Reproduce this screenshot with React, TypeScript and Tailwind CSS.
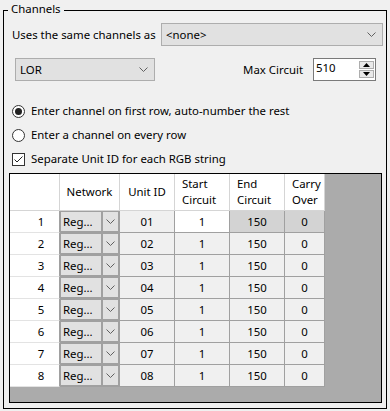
import React from "react";

const units = ["01", "02", "03", "04", "05", "06", "07", "08"];

function Chevron() {
  return (
    <svg width="9" height="5" viewBox="0 0 9 5" className="shrink-0">
      <path d="M0.5 0.5 L4.5 4.5 L8.5 0.5" fill="none" stroke="#606060" strokeWidth="1" />
    </svg>
  );
}

function Dropdown({ value, className }: { value: string; className: string }) {
  return (
    <div
      className={`flex h-[23px] items-center justify-between border border-[#adadad] bg-[#e1e1e1] pl-[4px] pr-[6px] ${className}`}
    >
      <span>{value}</span>
      <Chevron />
    </div>
  );
}

function Spinner() {
  return (
    <div className="ml-[10px] mr-[10px] flex h-[23px] w-[63px] border border-[#7a7a7a] bg-white">
      <span className="flex-1 pl-[2px] leading-[18px]">510</span>
      <div className="my-[2px] mr-[1px] flex w-[15px] flex-col gap-[1px]">
        <div className="flex flex-1 items-center justify-center border border-[#adadad] bg-[#e9e9e9]">
          <svg width="7" height="4" viewBox="0 0 7 4">
            <path d="M0 4 L3.5 0 L7 4 Z" fill="#000" />
          </svg>
        </div>
        <div className="flex flex-1 items-center justify-center border border-[#adadad] bg-[#e9e9e9]">
          <svg width="7" height="4" viewBox="0 0 7 4">
            <path d="M0 0 L3.5 4 L7 0 Z" fill="#000" />
          </svg>
        </div>
      </div>
    </div>
  );
}

function Radio({ checked, label }: { checked?: boolean; label: string }) {
  return (
    <div className="flex h-[24px] items-center pl-[8px]">
      <span className="flex h-[13px] w-[13px] items-center justify-center rounded-full border border-[#333] bg-white">
        {checked && <span className="h-[7px] w-[7px] rounded-full bg-[#222]" />}
      </span>
      <span className="ml-[6px]">{label}</span>
    </div>
  );
}

export default function App() {
  return (
    <div className="h-[411px] w-[390px] whitespace-nowrap bg-[#f0f0f0] pl-[3px] pt-[10px] font-['Noto_Sans',sans-serif] text-[11.4px] leading-[16px] text-black">
      <div className="relative flex h-[399px] w-[384px] flex-col border border-black">
        <span className="absolute left-[4px] top-[-10px] bg-[#f0f0f0] px-[3px]">Channels</span>

        <div className="mt-[12px] flex h-[23px] items-center pr-[3px]">
          <span className="ml-[8px]">Uses the same channels as</span>
          <Dropdown value="<none>" className="ml-auto w-[222px]" />
        </div>

        <div className="mt-[12px] flex h-[23px] items-center">
          <Dropdown value="LOR" className="ml-[11px] w-[140px]" />
          <span className="ml-auto">Max Circuit</span>
          <Spinner />
        </div>

        <div className="mt-[18px]">
          <Radio checked label="Enter channel on first row, auto-number the rest" />
          <Radio label="Enter a channel on every row" />
          <div className="flex h-[24px] items-center pl-[8px]">
            <span className="flex h-[13px] w-[13px] items-center justify-center border border-[#333] bg-white">
              <svg width="11" height="11" viewBox="0 0 11 11">
                <path d="M1.5 5.5 L4 8 L9.5 2.5" fill="none" stroke="#222" strokeWidth="1" />
              </svg>
            </span>
            <span className="ml-[6px]">Separate Unit ID for each RGB string</span>
          </div>
        </div>

        <div className="ml-[5px] mt-[2px] h-[230px] w-[373px] overflow-hidden border border-black bg-[#ababab]">
          <div className="flex h-[37px]">
            <div className="w-[50px] border-b border-r border-[#d5d5d5] bg-white" />
            <div className="flex w-[60px] items-center justify-center border-b border-r border-[#d5d5d5] bg-white">
              Network
            </div>
            <div className="flex w-[55px] items-center justify-center border-b border-r border-[#d5d5d5] bg-white">
              Unit ID
            </div>
            <div className="flex w-[55px] flex-col justify-center border-b border-r border-[#d5d5d5] bg-white pl-[7px]">
              <span>Start</span>
              <span>Circuit</span>
            </div>
            <div className="flex w-[55px] flex-col justify-center border-b border-r border-[#d5d5d5] bg-white pl-[7px]">
              <span>End</span>
              <span>Circuit</span>
            </div>
            <div className="flex w-[40px] flex-col justify-center border-b border-r border-[#d5d5d5] bg-white pl-[7px]">
              <span>Carry</span>
              <span>Over</span>
            </div>
          </div>

          {units.map((id, i) => (
            <div key={id} className="flex h-[22px]">
              <div className="flex w-[50px] items-center justify-center border-b border-r border-b-[#e3e3e3] border-r-[#a0a0a0] bg-white pl-[13px]">
                {i + 1}
              </div>
              <div className="w-[60px] border-b border-r border-[#a0a0a0]">
                <div className="flex h-full border border-[#a0a0a0] bg-[#e1e1e1]">
                  <div className="flex w-[40px] items-center pl-[2px]">Reg...</div>
                  <div className="flex flex-1 items-center justify-center border-l-2 border-[#a0a0a0]">
                    <Chevron />
                  </div>
                </div>
              </div>
              <div className="flex w-[55px] items-center justify-center border-b border-r border-[#a0a0a0] bg-[#f0f0f0]">
                {id}
              </div>
              <div
                className={`flex w-[55px] items-center justify-center border-b border-r border-[#a0a0a0] ${
                  i === 0 ? "bg-white" : "bg-[#f0f0f0]"
                }`}
              >
                1
              </div>
              <div
                className={`flex w-[55px] items-center justify-center border-b border-r border-[#a0a0a0] ${
                  i === 0 ? "bg-[#d3d3d3]" : "bg-[#f0f0f0]"
                }`}
              >
                150
              </div>
              <div
                className={`flex w-[40px] items-center justify-center border-b border-r border-[#a0a0a0] ${
                  i === 0 ? "bg-[#d3d3d3]" : "bg-[#f0f0f0]"
                }`}
              >
                0
              </div>
            </div>
          ))}
        </div>
      </div>
    </div>
  );
}
